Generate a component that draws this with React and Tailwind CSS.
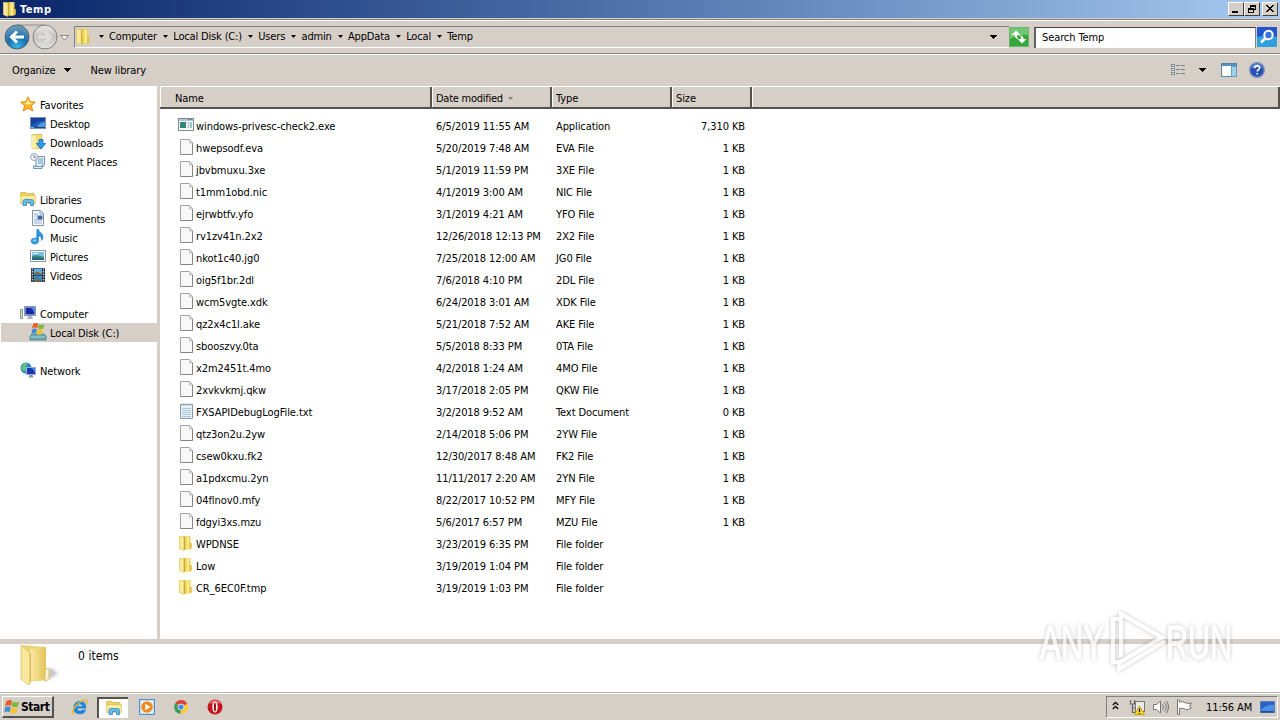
import React from 'react';

const FILES = [
  ['exe', 'windows-privesc-check2.exe', '6/5/2019 11:55 AM', 'Application', '7,310 KB'],
  ['file', 'hwepsodf.eva', '5/20/2019 7:48 AM', 'EVA File', '1 KB'],
  ['file', 'jbvbmuxu.3xe', '5/1/2019 11:59 PM', '3XE File', '1 KB'],
  ['file', 't1mm1obd.nic', '4/1/2019 3:00 AM', 'NIC File', '1 KB'],
  ['file', 'ejrwbtfv.yfo', '3/1/2019 4:21 AM', 'YFO File', '1 KB'],
  ['file', 'rv1zv41n.2x2', '12/26/2018 12:13 PM', '2X2 File', '1 KB'],
  ['file', 'nkot1c40.jg0', '7/25/2018 12:00 AM', 'JG0 File', '1 KB'],
  ['file', 'oig5f1br.2dl', '7/6/2018 4:10 PM', '2DL File', '1 KB'],
  ['file', 'wcm5vgte.xdk', '6/24/2018 3:01 AM', 'XDK File', '1 KB'],
  ['file', 'qz2x4c1l.ake', '5/21/2018 7:52 AM', 'AKE File', '1 KB'],
  ['file', 'sbooszvy.0ta', '5/5/2018 8:33 PM', '0TA File', '1 KB'],
  ['file', 'x2m2451t.4mo', '4/2/2018 1:24 AM', '4MO File', '1 KB'],
  ['file', '2xvkvkmj.qkw', '3/17/2018 2:05 PM', 'QKW File', '1 KB'],
  ['text', 'FXSAPIDebugLogFile.txt', '3/2/2018 9:52 AM', 'Text Document', '0 KB'],
  ['file', 'qtz3on2u.2yw', '2/14/2018 5:06 PM', '2YW File', '1 KB'],
  ['file', 'csew0kxu.fk2', '12/30/2017 8:48 AM', 'FK2 File', '1 KB'],
  ['file', 'a1pdxcmu.2yn', '11/11/2017 2:20 AM', '2YN File', '1 KB'],
  ['file', '04flnov0.mfy', '8/22/2017 10:52 PM', 'MFY File', '1 KB'],
  ['file', 'fdgyi3xs.mzu', '5/6/2017 6:57 PM', 'MZU File', '1 KB'],
  ['folder', 'WPDNSE', '3/23/2019 6:35 PM', 'File folder', ''],
  ['folder', 'Low', '3/19/2019 1:04 PM', 'File folder', ''],
  ['folder', 'CR_6EC0F.tmp', '3/19/2019 1:03 PM', 'File folder', ''],
];

const NAV = [
  { icon: 'star', label: 'Favorites', root: true },
  { icon: 'desktop', label: 'Desktop' },
  { icon: 'downloads', label: 'Downloads' },
  { icon: 'recent', label: 'Recent Places' },
  null,
  { icon: 'libraries', label: 'Libraries', root: true },
  { icon: 'documents', label: 'Documents' },
  { icon: 'music', label: 'Music' },
  { icon: 'pictures', label: 'Pictures' },
  { icon: 'videos', label: 'Videos' },
  null,
  { icon: 'computer', label: 'Computer', root: true },
  { icon: 'disk', label: 'Local Disk (C:)', selected: true },
  null,
  { icon: 'network', label: 'Network', root: true },
];

const CRUMBS = ['Computer', 'Local Disk (C:)', 'Users', 'admin', 'AppData', 'Local', 'Temp'];

const flag = (
  <>
    <path d="M1.500 2.500q3-2.500 6-.4L6.300 7.500Q3 5.600 0 8z" fill="#ee5a24" />
    <path d="M8.200 2.600q3 1.800 7 0L13.700 8q-3 1.600-6.600-.2z" fill="#7cb83c" />
    <path d="M0 9q3-2 6-.4L4.800 14q-3-1.500-5.500.2z" fill="#3c8ad8" />
    <path d="M6.800 8.800q3.400 1.800 6.600.4L12 14.700q-3 1.500-6.500-.2z" fill="#fbc02d" />
  </>
);

// 16x16 glyphs shared by the panes and the taskbar
const GLYPHS = {
  star: (
    <>
      <path d="M8 .8l2.100 4.900 5.300.4-4 3.500 1.300 5.400L8 12.200l-4.700 2.800 1.300-5.400-4-3.500 5.300-.4z" fill="#ffb92c" stroke="#ea8a18" strokeWidth="1" />
      <path d="M8 3l1.300 3.600L13 7 8 8.500 4.300 7l2.500-.4z" fill="#fff09a" />
    </>
  ),
  desktop: (
    <>
      <rect x=".5" y="2.500" width="15" height="11" fill="#2359bd" stroke="#7892b5" />
      <path d="M1 3h14v3Q8 5 1 11z" fill="#173e9b" />
      <path d="M7 12q3-5 8-5v5z" fill="#4d98e4" />
      <rect x="1" y="12" width="14" height="1" fill="#234368" />
      <rect x="1" y="12" width="3" height="1" fill="#58c6df" />
    </>
  ),
  folder: (
    <>
      <path d="M1.500 1.500L12.500 1v13.500l-11-.5z" fill="#ecd25c" />
      <path d="M1.500 1.200l4.500 1v13.300l-4.500-1.700z" fill="#faeb9c" stroke="#e0c55a" strokeWidth=".6" />
      <path d="M6.500 1.500h3.500v13H6.500z" fill="#f0d75c" />
      <path d="M9 1.500h2v13H9z" fill="#f9ec94" />
      <path d="M11.500 8h2.300v5.500l-2.300 1z" fill="#e4c146" />
      <path d="M6.400 1.500V15" stroke="#c39d27" strokeWidth=".9" />
    </>
  ),
  downloads: (
    <>
      <path d="M2 .5h10v14H2z" fill="#f3dc7b" stroke="#d7b74c" strokeWidth=".7" />
      <path d="M2 1l4 1.500V15l-4-1z" fill="#fdf1a7" />
      <path d="M9 5.500h4v4h2.700L11 15 6.300 9.500H9z" fill="#2c9de4" stroke="#176bb8" strokeWidth=".8" />
    </>
  ),
  recent: (
    <>
      <path d="M5 3.500h9.500v8.500H12v3.500H3.500V13H6V7z" fill="#e3edf4" stroke="#7693aa" />
      <path d="M8 6h5M8 8h5M8 10h5M5 13.500h9" stroke="#6f9fc3" />
      <circle cx="4" cy="4" r="3.500" fill="#f1f5f8" stroke="#93a6b5" />
      <path d="M4 2v2.300h2" fill="none" stroke="#4f6a82" strokeWidth=".8" />
    </>
  ),
  libraries: (
    <>
      <path d="M.7 1.500h5l1 1H14v3H.7z" fill="#efd35f" stroke="#cfae3e" strokeWidth=".7" />
      <path d="M.7 4.500h14.600v8H.7z" fill="#f9eba0" stroke="#d8bb50" strokeWidth=".7" />
      <path d="M3 14.500v-4q0-2 2-2h6.500q2 0 2 2v4h-3v-3h-4v3z" fill="#69bdea" stroke="#3186bd" strokeWidth=".8" />
    </>
  ),
  documents: (
    <>
      <path d="M2.500.5h8l3 3v12h-11z" fill="#fbfcfe" stroke="#7f93ad" />
      <path d="M10 .5V4h3.500" fill="#dfe7f0" stroke="#7f93ad" strokeWidth=".8" />
      <path d="M4 4h4M4 6h3M4 9h8M4 11h8M4 13h8" stroke="#8ba7cf" strokeWidth=".9" />
      <rect x="7.500" y="5.500" width="5" height="4" fill="#3c68a8" />
    </>
  ),
  music: (
    <>
      <path d="M7 .5h1.500c.5 3 4.500 3.500 4.500 7.500q0 2-1.500 3.500.6-4-3-5V12a3.700 3 0 1 1-1.800-2.500z" fill="#2a9be0" stroke="#166caf" strokeWidth=".6" />
      <ellipse cx="4.500" cy="11.500" rx="1.800" ry="1.200" fill="#79cffa" />
    </>
  ),
  pictures: (
    <>
      <rect x=".5" y="2.500" width="15" height="11" fill="#fff" stroke="#8598ab" />
      <rect x="2" y="4" width="12" height="8" fill="#78c0e8" />
      <path d="M2 8q5-2 12 1v3H2z" fill="#3d8a74" />
      <path d="M2 10.500q5-2 12 .5v1H2z" fill="#246689" />
      <path d="M3 5.500h5" stroke="#e9f8ff" />
    </>
  ),
  videos: (
    <>
      <rect x="1" y="1" width="14" height="14" fill="#25313b" />
      <path d="M2.500 1.500v14M13.500 1.500v14" stroke="#d6dde2" strokeWidth="1.400" strokeDasharray="1.300 1.300" />
      <rect x="4" y="1.500" width="8" height="6" fill="#5baede" />
      <rect x="4" y="8.500" width="8" height="6" fill="#3488c4" />
      <path d="M4 6.500l3-2 5 2.500v.5H4zM4 13.500l4-2 4 2.500v.5H4z" fill="#88643c" />
    </>
  ),
  computer: (
    <>
      <rect x=".5" y="4.500" width="2" height="9" fill="#cbd8ce" stroke="#8b9e91" />
      <rect x="4.500" y="1.500" width="11" height="9" fill="#d8dfea" stroke="#8795ae" />
      <rect x="5.500" y="2.500" width="9" height="7" fill="#1529a4" />
      <path d="M10 2.500h4.500v7q-1-5-4.500-7z" fill="#4c7ce0" />
      <path d="M8 11h4l1 3H7z" fill="#a9b5c6" />
    </>
  ),
  disk: (
    <>
      <path d="M2 10h12l2 2v4H0v-4z" fill="#67a7b5" stroke="#4e7985" strokeWidth=".7" />
      <path d="M1 12.500h14v1H1z" fill="#a9d7dd" />
      <g transform="translate(2 -2) scale(.82)">{flag}</g>
    </>
  ),
  network: (
    <>
      <circle cx="6" cy="6" r="5.500" fill="#2586cc" />
      <path d="M2 3q3-3 6-2L6 4l1 3-3 3Q2 7 1 7z" fill="#5fbf7e" />
      <rect x="6.500" y="5.500" width="9" height="7" fill="#1537b6" stroke="#9baed0" />
      <path d="M11 6h4v5q-1-3-4-5z" fill="#4380e1" />
      <path d="M9.500 13h3l1 2.500h-5z" fill="#8196b7" />
    </>
  ),
  file: (
    <>
      <path d="M2.500.5h9l3 3v12h-12z" fill="#f8f8f8" stroke="#a2a2a2" />
      <path d="M2.500 15.500h12V4" fill="none" stroke="#858585" />
      <path d="M11.500.5V4h3" fill="#dedede" stroke="#b5b5b5" strokeWidth=".8" />
    </>
  ),
  text: (
    <>
      <path d="M2.500 1.500h12v14h-12z" fill="#e8f1f8" stroke="#8e969e" />
      <path d="M4 5.500h9M4 7.500h9M4 9.500h9M4 11.500h9M4 13.500h9" stroke="#9fbdd6" strokeWidth=".8" />
      <path d="M3 1.500h11" stroke="#9aa2aa" strokeWidth="2" strokeDasharray="1 1" />
    </>
  ),
  exe: (
    <>
      <rect x=".5" y="1.500" width="15" height="12" fill="#f7f9fb" stroke="#7f8a99" />
      <path d="M1 3h14" stroke="#b7c4d6" strokeWidth="2" />
      <path d="M10 2.500h4" stroke="#536b92" strokeDasharray="1 .6" />
      <rect x="2" y="5" width="6" height="6" fill="#2f8775" />
      <path d="M9.500 6h2M9.500 8h2M9.500 10h2" stroke="#8a9cac" />
      <path d="M13 5v6" stroke="#3f9f87" />
    </>
  ),
  flag,
  ie: (
    <>
      <path d="M14.300 9.600H5.200q.4 2.200 2.800 2.200 1.500 0 2.200-1h3.800Q12.500 15.300 8 15.300 1.500 15 1.500 8.700 1.800 2.300 8 2.100q6.500.2 6.300 7.500zM5.300 7.200h5q-.3-2-2.400-2-2.100 0-2.600 2z" fill="#1b86dc" />
      <path d="M2.500 14.500Q-.5 15.500 1.500 10.500 4 5.500 9 2.300 14.500-.5 15 2.500q.2 1.200-.8 2.800" fill="none" stroke="#edbb22" strokeWidth="1.300" />
    </>
  ),
  media: (
    <>
      <rect x=".5" y=".5" width="15" height="15" fill="#bfe0f5" stroke="#4c91ca" />
      <rect x="2" y="2" width="12" height="12" fill="#e8f5fc" />
      <circle cx="8" cy="8" r="5.800" fill="#f38a1d" />
      <path d="M6.300 4.700L11.500 8l-5.200 3.300z" fill="#fff" />
    </>
  ),
  chrome: (
    <>
      <path d="M8 8L2.100 4.500A6.800 6.800 0 0 1 14.300 5z" fill="#dc4437" />
      <path d="M8 8L14.300 5A6.800 6.800 0 0 1 7.500 14.800z" fill="#fbcb2f" />
      <path d="M8 8L7.500 14.800A6.800 6.800 0 0 1 2.100 4.500z" fill="#35a150" />
      <circle cx="8" cy="8" r="3.300" fill="#f4f4f4" />
      <circle cx="8" cy="8" r="2.600" fill="#4a85e8" />
    </>
  ),
  opera: (
    <>
      <circle cx="8" cy="8" r="7.500" fill="#c5141b" />
      <path d="M2 5q2-4 6-4t6 4q-6-2-12 0z" fill="#e46a6c" />
      <ellipse cx="8" cy="8" rx="2.700" ry="5.500" fill="#fff" />
      <ellipse cx="8" cy="8" rx="1.100" ry="4.600" fill="#a80e15" />
    </>
  ),
};

function Glyph({ name, className = 'size-4' }) {
  return (
    <svg viewBox="0 0 16 16" className={`${className} shrink-0 overflow-visible`}>
      {GLYPHS[name]}
    </svg>
  );
}

function Arrow({ className = '' }) {
  return (
    <svg width="7" height="4" viewBox="0 0 7 4" className={`shrink-0 ${className}`} shapeRendering="crispEdges">
      <path d="M0 0h7L3.500 4z" fill="currentColor" />
    </svg>
  );
}

function CaptionButton({ children }) {
  return (
    <div className="flex h-[14px] w-4 items-center justify-center border border-t-white border-l-white border-r-[#404040] border-b-[#404040] bg-[#d6cfc7]">
      <svg width="12" height="10" viewBox="0 0 12 10" fill="none" stroke="#000" className="shrink-0" shapeRendering="crispEdges">
        {children}
      </svg>
    </div>
  );
}

function TitleBar() {
  return (
    <div className="flex h-[18px] items-center bg-gradient-to-r from-[#0a246a] to-[#a6caf0] pr-0.5 pl-0.5">
      <Glyph name="folder" />
      <span className="ml-0.5 flex-1 text-[11px] font-bold tracking-[0.55px] text-white">Temp</span>
      <CaptionButton>
        <path d="M2 7.500h6M2 8.500h6" />
      </CaptionButton>
      <CaptionButton>
        <path d="M4 1h6M4 2h6M4.500 1v3M9.500 1v5M8 5.500h2M2 4h6M2 5h6M2.500 4v5M7.500 4v5M2 8.500h6" />
      </CaptionButton>
      <div className="w-0.5" />
      <CaptionButton>
        <path d="M2 1l7 7M3 1l7 7M9 1L2 8M10 1L3 8" shapeRendering="auto" />
      </CaptionButton>
    </div>
  );
}

function AddressBar() {
  return (
    <div className="flex h-[34px] items-center border-t border-b border-t-white border-b-[#808080]">
      <svg width="70" height="28" viewBox="0 0 70 28" className="ml-1 shrink-0">
        <defs>
          <radialGradient id="back" cx=".5" cy=".9" r=".85">
            <stop offset="0" stopColor="#35b8e9" />
            <stop offset=".5" stopColor="#1b6eaa" />
            <stop offset="1" stopColor="#6f9cbc" />
          </radialGradient>
          <linearGradient id="fwd" x1="0" y1="0" x2="0" y2="1">
            <stop offset="0" stopColor="#e9e7e4" />
            <stop offset=".5" stopColor="#c5c2bf" />
            <stop offset="1" stopColor="#e6e4e1" />
          </linearGradient>
        </defs>
        <path d="M13 2h28" stroke="#8b8f94" />
        <circle cx="13" cy="14" r="12" fill="url(#back)" stroke="#4c6578" />
        <path d="M20 14H8M13 8.500L7.500 14l5.500 5.500" fill="none" stroke="#fff" strokeWidth="3" />
        <circle cx="41" cy="14" r="12" fill="url(#fwd)" stroke="#808080" />
        <path d="M34 14h12M41 8.500l5.500 5.500-5.500 5.500" fill="none" stroke="#e0dedb" strokeWidth="3" />
        <path d="M56.500 12.500h8L60.500 17z" fill="#f7f7f7" stroke="#858585" />
      </svg>
      <div className="flex h-[22px] flex-1 items-center border-t border-b border-l border-t-[#808080] border-b-white border-l-[#808080]">
        <Glyph name="folder" className="-mt-0.5 size-[17px]" />
        <div className="-mt-0.5 ml-[7px] flex flex-1 items-center tracking-[-0.16px]">
          {CRUMBS.map((crumb) => (
            <div key={crumb} className="flex items-center">
              <svg width="5" height="3" viewBox="0 0 5 3" className="mr-[5px]">
                <path d="M0 0h5L2.500 3z" />
              </svg>
              <span className="mr-[6.300px]">{crumb}</span>
            </div>
          ))}
        </div>
        <Arrow className="mr-3" />
      </div>
      <svg width="20" height="20" viewBox="0 0 20 20" className="shrink-0">
        <rect x=".5" y=".5" width="19" height="19" fill="#35a53c" stroke="#6ab46c" />
        <path d="M1 1h18v7Q10 7 1 12z" fill="#73c773" />
        <path d="M7 3.500L2.500 8h3q0 3.500 4 4-2-1.500-1.200-4h3zM13 16.500l4.500-4.500h-3q0-3.500-4-4 2 1.500 1.200 4h-3z" fill="#fff" />
      </svg>
      <div className="ml-[5px] flex h-[21px] w-[222px] items-center border-t border-r border-l-2 border-t-[#404040] border-r-[#808080] border-l-[#606060] bg-white pl-1.5">
        Search Temp
      </div>
      <svg width="20" height="20" viewBox="0 0 20 20" className="mr-[3px] ml-px shrink-0">
        <rect width="20" height="20" fill="#2455cf" />
        <path d="M0 10q10-3 20 0v10H0z" fill="#2f9fe0" />
        <circle cx="11.500" cy="8" r="4.200" fill="#3c70df" stroke="#fff" strokeWidth="2" />
        <path d="M8.500 11L4 15.500" stroke="#fff" strokeWidth="2.600" />
      </svg>
    </div>
  );
}

function Toolbar() {
  return (
    <div className="flex h-[31px] items-center border-t border-t-white pl-3">
      <span className="tracking-[-0.1px]">Organize</span>
      <Arrow className="ml-2" />
      <span className="ml-5 flex-1">New library</span>
      <svg width="16" height="14" viewBox="0 0 16 14" fill="none" className="mr-[13px]" shapeRendering="crispEdges">
        <path d="M1 1.500h3v2H1zM1 5.500h3v2H1zM1 9.500h3v2H1z" fill="#fff" stroke="#7e8995" />
        <path d="M6 2.500h4M11 2.500h4M6 6.500h4M11 6.500h4M6 10.500h4M11 10.500h4" stroke="#768595" />
      </svg>
      <Arrow className="mr-[15px]" />
      <svg width="16" height="14" viewBox="0 0 16 14" className="mr-3" shapeRendering="crispEdges">
        <rect x=".5" y=".5" width="15" height="13" fill="#fff" stroke="#5584aa" />
        <path d="M1 2h14" stroke="#5592c2" strokeWidth="2" />
        <path d="M10 3h5v10h-5z" fill="#9bd2ee" stroke="#6d9dbc" />
      </svg>
      <svg width="16" height="16" viewBox="0 0 16 16" className="mr-[15px]">
        <circle cx="8" cy="8" r="7.300" fill="#2850b5" stroke="#7c91ba" strokeWidth="1.400" />
        <path d="M2.500 6Q4 2 8 2t5.500 4q-6-2-11 0z" fill="#6c91dd" />
        <path d="M5.600 6.300q0-2.500 2.500-2.500t2.400 2.100q0 1.200-1.300 2-.9.600-.9 1.700M8.300 11v1.600" fill="none" stroke="#fff" strokeWidth="1.700" />
      </svg>
    </div>
  );
}

function Sidebar() {
  return (
    <div className="w-[160px] shrink-0 border-r-[3px] border-r-[#d6cfc7] pt-[9px]">
      {NAV.map((item, i) =>
        item ? (
          <div
            key={item.label}
            className={`flex h-[19px] items-center ${item.selected ? 'ml-px bg-[#d6cfc7] pl-[29px]' : item.root ? 'pl-5' : 'pl-[30px]'}`}
          >
            <Glyph name={item.icon} className="-mt-px size-4" />
            <span className="ml-1 pt-0.5 tracking-[-0.12px]">{item.label}</span>
          </div>
        ) : (
          <div key={i} className="h-[19px]" />
        )
      )}
    </div>
  );
}

const HEAD = 'flex items-center border-r-2 border-r-[#55524e] pt-[3px] shadow-[inset_1px_0_0_#fff]';

function FileList() {
  return (
    <div className="flex-1">
      <div className="flex h-[23px] border-t border-b-2 border-t-white border-b-[#55524e] bg-[#d6cfc7]">
        <div className={`${HEAD} w-[272px] pl-[15px]`}>Name</div>
        <div className={`${HEAD} w-[120px] pl-1 tracking-[-0.25px]`}>
          Date modified
          <svg width="5" height="3" viewBox="0 0 5 3" className="ml-[5px]">
            <path d="M0 0h5L2.500 3z" fill="#808080" />
          </svg>
        </div>
        <div className={`${HEAD} w-[120px] pl-1`}>Type</div>
        <div className={`${HEAD} w-20 pl-1`}>Size</div>
        <div className={`${HEAD} flex-1`} />
      </div>
      <div className="pt-1.5">
        {FILES.map(([icon, name, date, type, size]) => (
          <div key={name} className="flex h-[22px] items-center pl-[18px]">
            <Glyph name={icon} className="-mt-0.5 size-4" />
            <span className="ml-0.5 w-60 tracking-[-0.08px]">{name}</span>
            <span className="w-[120px] tracking-[-0.08px]">{date}</span>
            <span className="w-[120px] tracking-[-0.1px]">{type}</span>
            <span className="w-[69px] text-right">{size}</span>
          </div>
        ))}
      </div>
    </div>
  );
}

function DetailsPane() {
  return (
    <div className="flex h-[49px] items-start bg-white pl-[18px]">
      <svg width="44" height="44" viewBox="0 0 44 44" className="shrink-0">
        <defs>
          <linearGradient id="leaf" x1="0" x2="1">
            <stop offset="0" stopColor="#fbe9a0" />
            <stop offset="1" stopColor="#e3c35c" />
          </linearGradient>
          <filter id="soft">
            <feGaussianBlur stdDeviation="1.500" />
          </filter>
        </defs>
        <path d="M26 38l14-8-6-6-8 2z" fill="#c4c8cc" filter="url(#soft)" />
        <path d="M4 1l24 2v33l-18 2z" fill="#ecd277" />
        <path d="M12 5l16-2v33l-16 1z" fill="url(#leaf)" />
        <path d="M3 1l9 8v31q-1 1-3 0l-6-5z" fill="#f9e89d" stroke="#ddbf62" strokeWidth=".8" />
        <path d="M12.300 9v29" stroke="#c9a94c" strokeWidth=".8" />
        <path d="M27 27q3-5 4-1v9l-4 2z" fill="#f8f2d0" stroke="#d9b94f" strokeWidth=".8" />
      </svg>
      <span className="mt-[3px] ml-4 text-[12px] leading-[18px] tracking-[0.05px]">0 items</span>
    </div>
  );
}

function Watermark() {
  return (
    <svg width="240" height="80" viewBox="0 0 240 80" className="absolute top-[604px] left-[1035px] overflow-visible">
      <defs>
        <filter id="halo" x="-10%" y="-20%" width="120%" height="140%">
          <feDropShadow dx="0" dy="0" stdDeviation="2" floodColor="#666" floodOpacity=".55" />
        </filter>
      </defs>
      <g filter="url(#halo)" fill="#fff" opacity=".72" className="font-['Liberation_Sans_Narrow','Liberation_Sans',sans-serif] text-[48px]">
        <text x="5" y="55" textLength="64" lengthAdjust="spacingAndGlyphs" stroke="#fff">ANY</text>
        <text x="131" y="55" textLength="66" lengthAdjust="spacingAndGlyphs" stroke="#fff">RUN</text>
        <path d="M86 53V10l41 23.500L84 59v6l46-28" fill="none" stroke="#fff" strokeWidth="4" />
        <path d="M84 15h-6v43h6" fill="none" stroke="#fff" strokeWidth="4" />
      </g>
    </svg>
  );
}

function Taskbar() {
  return (
    <div className="flex h-[27px] items-center border-t border-t-white pl-0.5 shadow-[0_-1px_0_#b8b4ac]">
      <div className="flex h-[22px] w-[52px] items-center border-t border-r-2 border-b-2 border-l border-t-white border-r-[#55524e] border-b-[#55524e] border-l-white pl-0.5">
        <Glyph name="flag" className="size-[15px]" />
        <span className="ml-px pt-0.5 text-[12px] font-bold tracking-[-0.45px]">Start</span>
      </div>
      <Glyph name="ie" className="ml-[18px] size-4" />
      <div className="ml-[9px] flex h-[21px] w-[31px] items-center justify-center border-t-2 border-l-2 border-t-[#55524e] border-l-[#55524e] bg-white">
        <Glyph name="libraries" />
      </div>
      <Glyph name="media" className="ml-[11px] size-4" />
      <Glyph name="chrome" className="ml-[18px] size-4" />
      <Glyph name="opera" className="ml-[18px] size-4" />
      <div className="mr-0.5 ml-auto flex h-[22px] w-[172px] items-center border border-t-[#808080] border-r-white border-b-white border-l-[#808080] pl-[5px]">
        <svg width="7" height="9" viewBox="0 0 7 9" fill="none" stroke="#000" strokeWidth="1.300" className="-mt-1">
          <path d="M.8 4l2.700-2.700L6.200 4M.8 8l2.700-2.700L6.200 8" />
        </svg>
        <svg width="16" height="16" viewBox="0 0 16 16" className="ml-[10px]">
          <path d="M1.500 1v4h4V1M3.500 5v8.500H8M3.500 9H7" fill="none" stroke="#676767" strokeWidth="1.200" />
          <rect x="6.500" y="2.500" width="9" height="10" fill="#e9e9e9" stroke="#777" />
          <path d="M10.500 7l5 8.500h-10z" fill="#ffd91f" stroke="#b59600" strokeWidth=".8" />
          <path d="M10.500 9.500V13M10.500 14v1" stroke="#000" strokeWidth="1.200" />
        </svg>
        <svg width="18" height="16" viewBox="0 0 18 16" fill="none" stroke="#757575" className="ml-[7px]">
          <path d="M1.500 5.500h3L8.500 2v12l-4-3.500h-3z" fill="#fff" />
          <path d="M10.500 5.500q2 2.500 0 5M12.500 3.500q3.500 4.500 0 9M14.500 2q4 6 0 12" />
        </svg>
        <svg width="16" height="16" viewBox="0 0 16 16" fill="#fff" stroke="#777" className="ml-1.5">
          <path d="M1.500 1v14.500h2V9.500q3-1 6 1 2.500.5 6-1.500l-2-2 2-3q-3 1-5.500 0-3-2-6.500-1V1z" />
        </svg>
        <span className="ml-[14px] whitespace-nowrap tracking-[-0.1px]">11:56 AM</span>
        <svg width="16" height="14" viewBox="0 0 16 14" className="ml-2 shrink-0">
          <rect x=".5" y="1.500" width="14" height="11" fill="#2862c8" stroke="#5c7fb6" />
          <path d="M1 10Q7 4 14 5v6H1z" fill="#4e91e0" />
          <path d="M1 12h13" stroke="#173c7c" />
        </svg>
      </div>
    </div>
  );
}

export default function App() {
  return (
    <div className="relative flex h-[720px] w-[1280px] flex-col overflow-hidden bg-[#d6cfc7] font-['DejaVu_Sans_Condensed','DejaVu_Sans',sans-serif] text-[11px] leading-[13px] tracking-[-0.1px] text-black">
      <TitleBar />
      <div className="h-0.5 border-b border-b-[#808080]" />
      <AddressBar />
      <Toolbar />
      <div className="mt-px flex h-[553px] bg-white">
        <Sidebar />
        <FileList />
      </div>
      <div className="h-[5px]" />
      <DetailsPane />
      <Taskbar />
      <Watermark />
    </div>
  );
}
